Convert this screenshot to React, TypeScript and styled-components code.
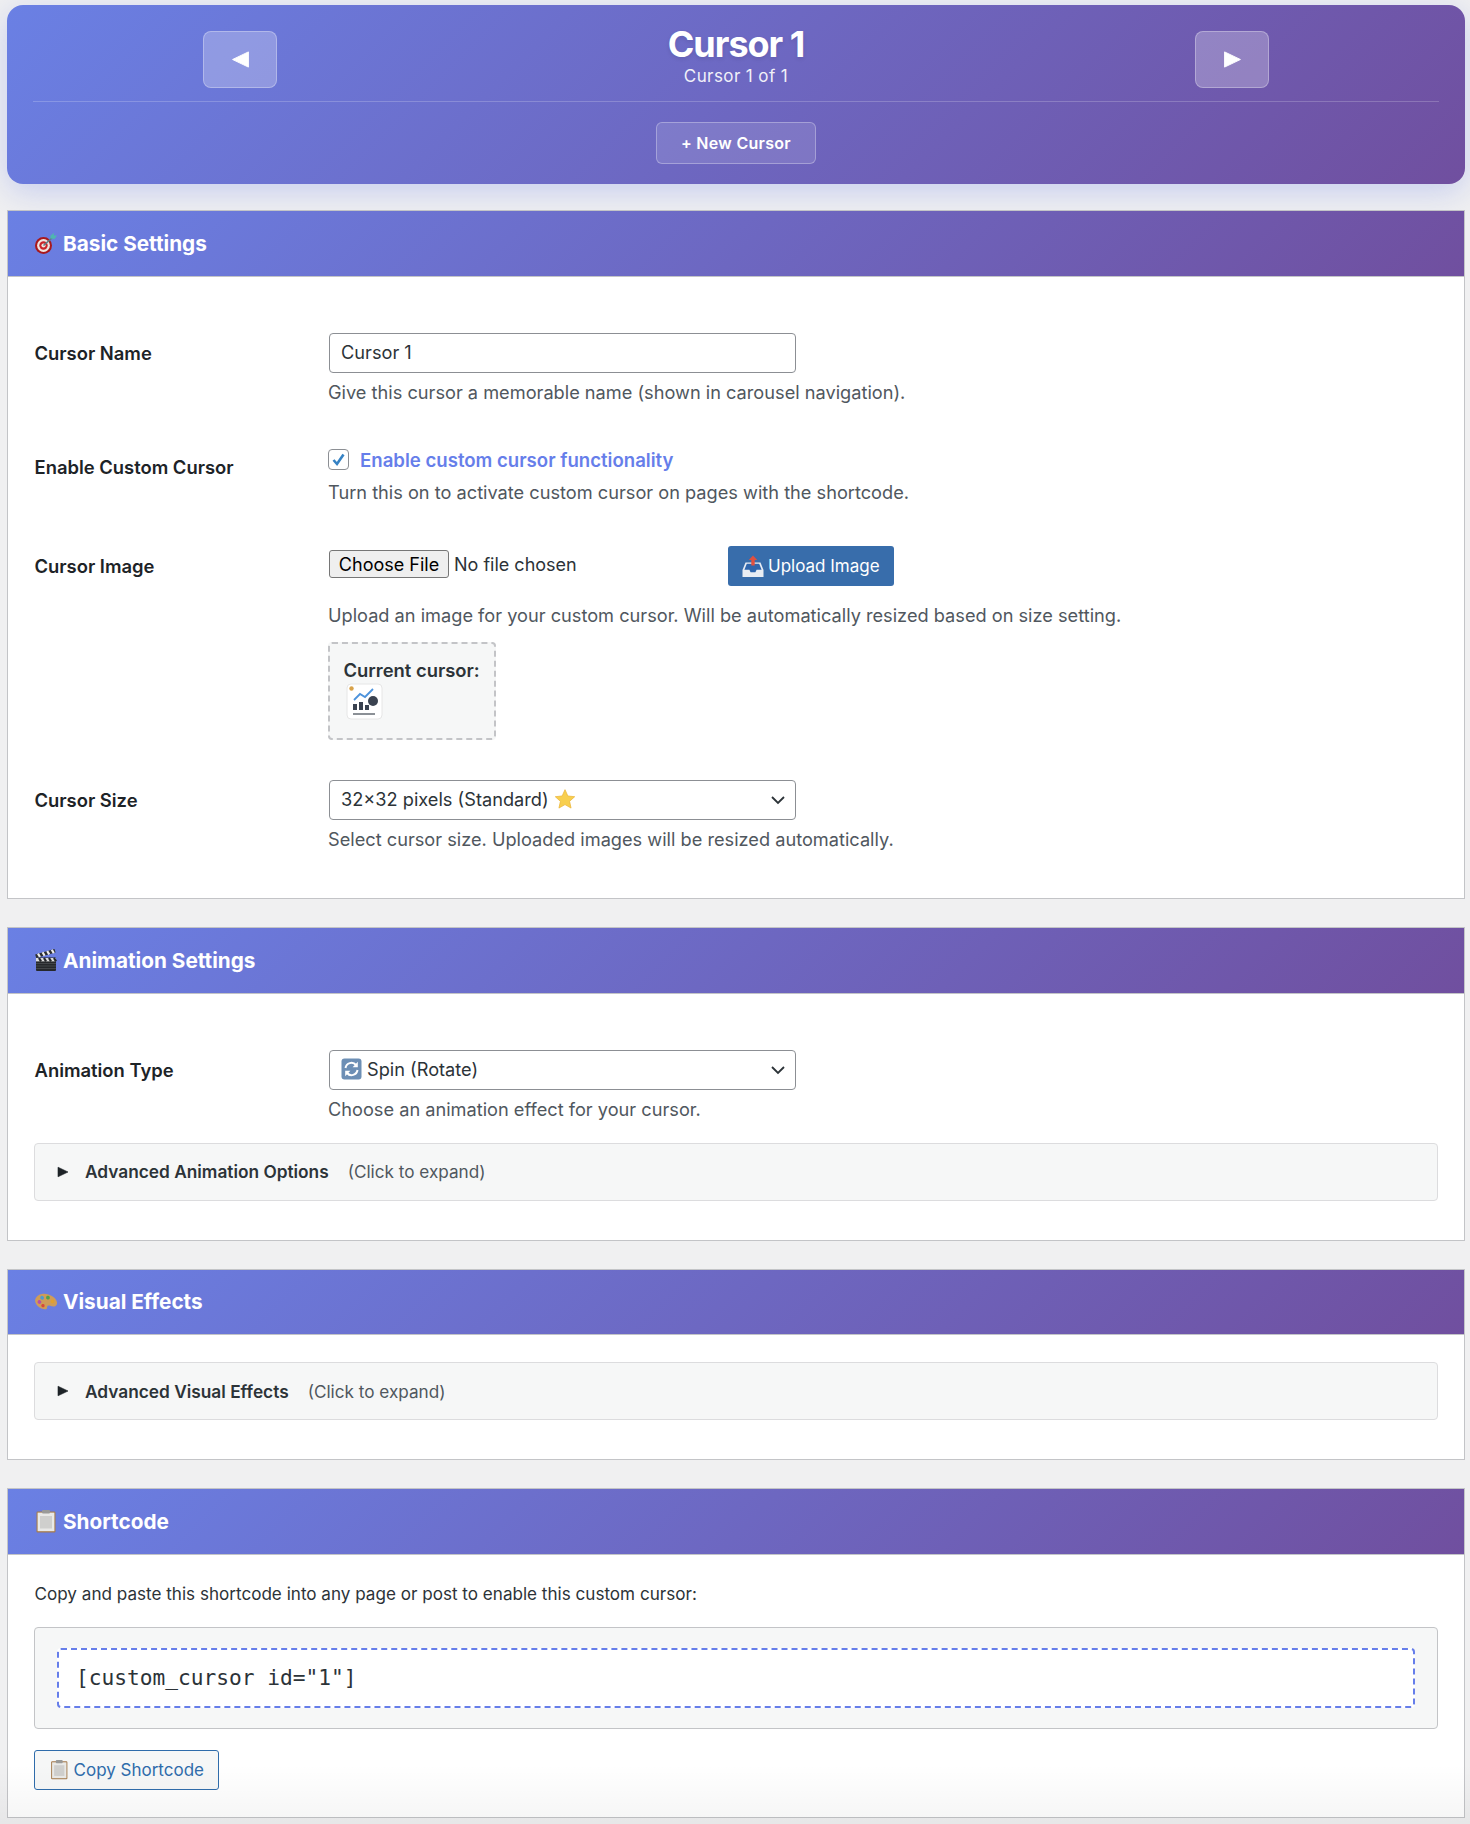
import React from 'react';
import styled, { createGlobalStyle } from 'styled-components';

const GlobalStyle = createGlobalStyle`
  html, body {
    margin: 0;
    padding: 0;
    background: #f0f0f1;
  }
  body {
    font-family: Inter, "Liberation Sans", sans-serif;
    color: #1d2327;
  }
  * {
    box-sizing: border-box;
  }
`;

const brandGradient = 'linear-gradient(135deg, #6a80e4 0%, #704f9f 100%)';

const Page = styled.div`
  position: relative;
  padding: 5px 5px 7px 7px;
  height: 1824px;
  overflow: hidden;
`;

const BottomFade = styled.div`
  position: absolute;
  left: 0;
  right: 0;
  bottom: 0;
  height: 60px;
  background: linear-gradient(to bottom, rgba(0, 0, 0, 0), rgba(0, 0, 0, 0.04));
  pointer-events: none;
`;

const Carousel = styled.header`
  height: 179px;
  margin-bottom: 26px;
  padding: 26px 26px 0;
  border-radius: 16px;
  background: ${brandGradient};
  box-shadow: 0 8px 32px rgba(102, 126, 234, 0.3);
  color: #fff;
`;

const CarouselTop = styled.div`
  display: grid;
  grid-template-columns: 170px 74px 1fr 74px 170px;
  align-items: start;
  height: 71px;
  border-bottom: 1px solid rgba(255, 255, 255, 0.2);
`;

const NavButton = styled.button<{ $col: number }>`
  display: flex;
  align-items: center;
  justify-content: center;
  grid-column: ${(p) => p.$col};
  width: 74px;
  height: 57px;
  padding: 0;
  border: 1px solid rgba(255, 255, 255, 0.3);
  border-radius: 8px;
  background: rgba(255, 255, 255, 0.25);
  color: #fff;
`;

const CarouselTitle = styled.div`
  grid-column: 3;
  text-align: center;
`;

const CursorName = styled.h1`
  margin: -9px 0 0;
  font-size: 36px;
  line-height: 44px;
  font-weight: 700;
  letter-spacing: -1px;
  text-shadow: 0 2px 4px rgba(0, 0, 0, 0.1);
`;

const CursorCount = styled.div`
  font-size: 17px;
  line-height: 20px;
  letter-spacing: 0.4px;
  opacity: 0.9;
`;

const CarouselActions = styled.div`
  display: flex;
  justify-content: center;
  padding-top: 20px;
`;

const NewCursorButton = styled.button`
  width: 160px;
  height: 42px;
  padding: 0;
  border: 1px solid rgba(255, 255, 255, 0.3);
  border-radius: 6px;
  background: rgba(255, 255, 255, 0.12);
  color: #fff;
  font: 600 16px Inter, sans-serif;
  letter-spacing: 0.3px;
`;

const Section = styled.section`
  margin-bottom: 28px;
  border: 1px solid #c3c4c7;
  background: #fff;
`;

const SectionHeader = styled.h2`
  display: flex;
  align-items: center;
  gap: 5px;
  height: 65.5px;
  margin: 0;
  padding: 0 26px;
  border-bottom: 1px solid #c3c4c7;
  background: ${brandGradient};
  color: #fff;
  font-size: 20.75px;
  font-weight: 700;
`;

const SectionBody = styled.div<{ $top: number; $bottom: number }>`
  padding: ${(p) => p.$top}px 26px ${(p) => p.$bottom}px;
`;

const Row = styled.div<{ $bottom?: number }>`
  display: grid;
  grid-template-columns: 294px 1fr;
  padding: 20px 0 ${(p) => p.$bottom ?? 20}px;
`;

const RowLabel = styled.label<{ $offset?: number }>`
  margin-top: ${(p) => p.$offset ?? 0}px;
  padding-left: 0.5px;
  color: #1d2327;
  font-size: 18.4px;
  line-height: 40px;
  font-weight: 600;
`;

const FieldBox = styled.div`
  display: flex;
  align-items: center;
  gap: 5px;
  width: 467px;
  height: 40px;
  margin-left: 1px;
  padding: 0 8px 2px 11px;
  border: 1px solid #8c8f94;
  border-radius: 4px;
  background: #fff;
  color: #2c3338;
  font-size: 18.2px;
`;

const Chevron = styled.svg`
  margin-left: auto;
  margin-top: 2px;
`;

const HelpText = styled.p<{ $top?: number }>`
  margin: ${(p) => p.$top ?? 9}px 0 0;
  padding-bottom: 2px;
  color: #50575e;
  font-size: 18.2px;
  line-height: 20px;
`;

const CheckRow = styled.div`
  display: flex;
  align-items: center;
  gap: 11px;
  height: 32px;
`;

const CheckBox = styled.span`
  display: flex;
  align-items: center;
  justify-content: center;
  width: 21px;
  height: 21px;
  border: 1px solid #8c8f94;
  border-radius: 4px;
  background: #fff;
`;

const CheckLabel = styled.span`
  color: #667eea;
  font-size: 18.6px;
  font-weight: 600;
`;

const UploadRow = styled.div`
  display: flex;
  align-items: center;
  height: 44px;
  padding-left: 1px;
`;

const ChooseFile = styled.span`
  display: flex;
  align-items: center;
  justify-content: center;
  width: 120px;
  height: 28px;
  margin-top: -3px;
  border: 1px solid #767676;
  border-radius: 3px;
  background: #efefef;
  color: #000;
  font-size: 18px;
`;

const NoFile = styled.span`
  width: 279px;
  margin-top: -3px;
  padding-left: 5px;
  font-size: 18px;
  color: #2c3338;
`;

const UploadButton = styled.button`
  display: flex;
  align-items: center;
  gap: 4px;
  width: 166px;
  height: 40px;
  padding: 0 14px;
  border: 0;
  border-radius: 3px;
  background: #386dab;
  color: #fff;
  font: 400 17px Inter, sans-serif;
`;

const CurrentBox = styled.div`
  width: 168px;
  height: 98px;
  margin-top: 15px;
  padding: 15px 13.5px;
  border: 2px dashed #c3c4c7;
  border-radius: 4px;
  background: #f6f7f7;
`;

const CurrentLabel = styled.div`
  color: #2c3338;
  font-size: 18.4px;
  line-height: 22px;
  font-weight: 600;
  white-space: nowrap;
`;

const Details = styled.div`
  display: flex;
  align-items: center;
  height: 58px;
  padding: 0 22px;
  border: 1px solid #dcdcde;
  border-radius: 4px;
  background: #f6f7f7;
`;

const DetailsTitle = styled.span`
  margin: 0 19px 0 16px;
  color: #2c3338;
  font-size: 17.3px;
  font-weight: 600;
`;

const DetailsHint = styled.span`
  color: #50575e;
  font-size: 17.15px;
`;

const Intro = styled.p`
  margin: 0;
  padding-left: 0.5px;
  color: #2c3338;
  font-size: 17.1px;
  line-height: 22px;
`;

const CodeBox = styled.div`
  margin-top: 22px;
  padding: 20px 22px;
  border: 1px solid #c3c4c7;
  border-radius: 4px;
  background: #f6f7f7;
`;

const Code = styled.code`
  display: block;
  height: 60px;
  padding: 0 17px;
  border: 2px dashed #667eea;
  border-radius: 4px;
  background: #fff;
  color: #2c3338;
  font-family: "DejaVu Sans Mono", monospace;
  font-size: 21.2px;
  line-height: 56px;
`;

const CopyButton = styled.button`
  display: flex;
  align-items: center;
  gap: 4px;
  width: 185px;
  height: 40px;
  margin-top: 21px;
  padding: 0 14px;
  border: 1px solid #2f6cab;
  border-radius: 3px;
  background: #f6f7f7;
  color: #2f6cab;
  font: 400 17px Inter, sans-serif;
  white-space: nowrap;
`;

const TargetIcon = () => (
  <svg width="24" height="24" viewBox="0 0 24 24">
    <circle cx="9.5" cy="14.5" r="8.5" fill="#a8181c" />
    <circle cx="9.5" cy="14.5" r="6.4" fill="#f1e4e0" />
    <circle cx="9.5" cy="14.5" r="4.2" fill="#c9252a" />
    <circle cx="9.5" cy="14.5" r="2.1" fill="#f1e4e0" />
    <path d="M9.5 14.5 L18.5 6.5" stroke="#5c7f86" strokeWidth="1.6" />
    <path d="M16.5 4.5 L20 2 L19.8 4.6 L23 4.5 L20.5 8 L16.5 7.5z" fill="#4fb6b0" />
  </svg>
);

const ClapperIcon = () => (
  <svg width="24" height="24" viewBox="0 0 24 24">
    <rect x="2" y="9.5" width="20" height="13.5" rx="1" fill="#26282b" />
    <path d="M2 15.5h20M2 18h20M2 20.5h20" stroke="#46494d" strokeWidth="0.9" />
    <path d="M1.2 6.5 L20.5 1 L21.6 4.6 L2.2 10z" fill="#2c2e31" />
    <path d="M4 5.6 L6 9 M8.6 4.3 L10.6 7.7 M13.2 3 L15.2 6.4 M17.8 1.7 L19.8 5.1" stroke="#ececec" strokeWidth="2.2" />
    <rect x="2" y="10" width="20" height="3.4" fill="#dcdcdc" />
    <path d="M5 10l2 3.4M10 10l2 3.4M15 10l2 3.4M20 10l2 3.4" stroke="#26282b" strokeWidth="2.2" />
  </svg>
);

const PaletteIcon = () => (
  <svg width="24" height="24" viewBox="0 0 24 24">
    <g transform="rotate(18 12 12)">
      <path d="M12 4C5.5 4 1 8 1 12.5c0 4.2 5 7 10.5 7 3 0 3.8-1.3 3.2-2.8-.6-1.5.4-2.6 2.3-2.4 3 .3 6-.6 6-3.6C23 6.9 18 4 12 4z" fill="#cf9c58" />
      <circle cx="7" cy="9.2" r="1.9" fill="#4f9ad0" />
      <circle cx="12.5" cy="7.2" r="1.9" fill="#4ea14e" />
      <circle cx="18" cy="9.4" r="1.9" fill="#e0a030" />
      <circle cx="5.8" cy="14" r="1.9" fill="#b84ea8" />
      <circle cx="10.2" cy="16.4" r="1.7" fill="#d8483b" />
    </g>
  </svg>
);

const ClipboardIcon = ({ size = 24 }: { size?: number }) => (
  <svg width={size} height={size} viewBox="0 0 24 24">
    <rect x="2.5" y="2.5" width="19" height="21" rx="1.2" fill="#a47a4c" />
    <rect x="3.6" y="3.6" width="16.8" height="18.6" fill="#e9e9e7" />
    <rect x="6" y="7" width="12" height="12.5" fill="#cfcfcd" />
    <rect x="8" y="1" width="8" height="3.6" rx="1" fill="#9a9a98" />
  </svg>
);

const StarIcon = () => (
  <svg width="22" height="22" viewBox="0 0 24 24">
    <path d="M12 1.8l3.1 6.9 7.5.8-5.6 5 1.6 7.4L12 18.1l-6.6 3.8L7 14.5l-5.6-5 7.5-.8z" fill="#f8cf4e" stroke="#eab334" strokeWidth="0.8" />
  </svg>
);

const SpinIcon = () => (
  <svg width="21" height="22" viewBox="0 0 21 22">
    <rect x="0.5" y="0.5" width="20" height="21" rx="3" fill="#6d8fb5" />
    <path d="M4.5 10a6 6 0 0 1 10.5-3" fill="none" stroke="#fff" strokeWidth="2" />
    <path d="M16.8 3.8v5.4h-5.2z" fill="#fff" />
    <path d="M16.5 12a6 6 0 0 1-10.5 3" fill="none" stroke="#fff" strokeWidth="2" />
    <path d="M4.2 18.2v-5.4h5.2z" fill="#fff" />
  </svg>
);

const InboxIcon = () => (
  <svg width="22" height="24" viewBox="0 0 22 24">
    <path d="M3.5 8.5h15l3 7.5v7h-21v-7z" fill="#e9edf3" />
    <path d="M4.8 9.8h12.4l2.4 6h-5l-1.2 2.4H8.6l-1.2-2.4h-5z" fill="#2f66ad" />
    <path d="M11 1.5l4.2 4.4h-2.5v5.6H9.3V5.9H6.8z" fill="#e0503f" />
  </svg>
);

const CursorThumb = () => (
  <svg width="41" height="41" viewBox="0 0 41 41">
    <rect x="3" y="3" width="35" height="35" rx="4" fill="#fff" stroke="#e6e6e6" strokeWidth="1" />
    <circle cx="7.5" cy="7.5" r="2.2" fill="#d8a24a" />
    <path d="M10 19l6-6 5 3 8-8" fill="none" stroke="#4d93dc" strokeWidth="1.8" />
    <rect x="9" y="23" width="4" height="6" fill="#3a4250" />
    <rect x="15" y="21" width="4" height="8" fill="#3a4250" />
    <rect x="21" y="24" width="4" height="5" fill="#3a4250" />
    <circle cx="29" cy="20" r="5" fill="#3a4250" />
    <rect x="9" y="32" width="22" height="2" fill="#8b9096" />
  </svg>
);

const DownChevron = () => (
  <Chevron width="18" height="16" viewBox="0 0 18 16">
    <path d="M3 5 L9 11 L15 5" fill="none" stroke="#2c3338" strokeWidth="1.8" />
  </Chevron>
);

const Triangle = ({ size, flip }: { size: number; flip?: boolean }) => (
  <svg width={size} height={size} viewBox="0 0 12 12">
    <path d={flip ? 'M11 1.2v9.6L1 6z' : 'M1 1.2v9.6L11 6z'} fill="currentColor" strokeLinejoin="round" stroke="currentColor" strokeWidth="0.6" />
  </svg>
);

function App() {
  return (
    <Page>
      <GlobalStyle />
      <Carousel>
        <CarouselTop>
          <NavButton $col={2} aria-label="Previous cursor">
            <Triangle size={19} flip />
          </NavButton>
          <CarouselTitle>
            <CursorName>Cursor 1</CursorName>
            <CursorCount>Cursor 1 of 1</CursorCount>
          </CarouselTitle>
          <NavButton $col={4} aria-label="Next cursor">
            <Triangle size={19} />
          </NavButton>
        </CarouselTop>
        <CarouselActions>
          <NewCursorButton>+ New Cursor</NewCursorButton>
        </CarouselActions>
      </Carousel>

      <Section>
        <SectionHeader><TargetIcon /> Basic Settings</SectionHeader>
        <SectionBody $top={36} $bottom={27.5}>
          <Row>
            <RowLabel>Cursor Name</RowLabel>
            <div>
              <FieldBox>Cursor 1</FieldBox>
              <HelpText>Give this cursor a memorable name (shown in carousel navigation).</HelpText>
            </div>
          </Row>
          <Row>
            <RowLabel $offset={3}>Enable Custom Cursor</RowLabel>
            <div>
              <CheckRow>
                <CheckBox>
                  <svg width="15" height="15" viewBox="0 0 15 15">
                    <path d="M2.5 8l3.5 4L12.5 2.5" fill="none" stroke="#3582c4" strokeWidth="2.6" />
                  </svg>
                </CheckBox>
                <CheckLabel>Enable custom cursor functionality</CheckLabel>
              </CheckRow>
              <HelpText $top={6}>Turn this on to activate custom cursor on pages with the shortcode.</HelpText>
            </div>
          </Row>
          <Row>
            <RowLabel $offset={2}>Cursor Image</RowLabel>
            <div>
              <UploadRow>
                <ChooseFile>Choose File</ChooseFile>
                <NoFile>No file chosen</NoFile>
                <UploadButton><InboxIcon /> Upload Image</UploadButton>
              </UploadRow>
              <HelpText $top={17}>Upload an image for your custom cursor. Will be automatically resized based on size setting.</HelpText>
              <CurrentBox>
                <CurrentLabel>Current cursor:</CurrentLabel>
                <CursorThumb />
              </CurrentBox>
            </div>
          </Row>
          <Row>
            <RowLabel>Cursor Size</RowLabel>
            <div>
              <FieldBox>32×32 pixels (Standard) <StarIcon /><DownChevron /></FieldBox>
              <HelpText>Select cursor size. Uploaded images will be resized automatically.</HelpText>
            </div>
          </Row>
        </SectionBody>
      </Section>

      <Section>
        <SectionHeader><ClapperIcon /> Animation Settings</SectionHeader>
        <SectionBody $top={36} $bottom={39}>
          <Row $bottom={22}>
            <RowLabel>Animation Type</RowLabel>
            <div>
              <FieldBox><SpinIcon /> Spin (Rotate)<DownChevron /></FieldBox>
              <HelpText>Choose an animation effect for your cursor.</HelpText>
            </div>
          </Row>
          <Details>
            <Triangle size={12} />
            <DetailsTitle>Advanced Animation Options</DetailsTitle>
            <DetailsHint>(Click to expand)</DetailsHint>
          </Details>
        </SectionBody>
      </Section>

      <Section>
        <SectionHeader><PaletteIcon /> Visual Effects</SectionHeader>
        <SectionBody $top={27} $bottom={39}>
          <Details>
            <Triangle size={12} />
            <DetailsTitle>Advanced Visual Effects</DetailsTitle>
            <DetailsHint>(Click to expand)</DetailsHint>
          </Details>
        </SectionBody>
      </Section>

      <Section>
        <SectionHeader><ClipboardIcon /> Shortcode</SectionHeader>
        <SectionBody $top={28} $bottom={27}>
          <Intro>Copy and paste this shortcode into any page or post to enable this custom cursor:</Intro>
          <CodeBox>
            <Code>[custom_cursor id="1"]</Code>
          </CodeBox>
          <CopyButton><ClipboardIcon size={21} /> Copy Shortcode</CopyButton>
        </SectionBody>
      </Section>
      <BottomFade />
    </Page>
  );
}

export default App;
